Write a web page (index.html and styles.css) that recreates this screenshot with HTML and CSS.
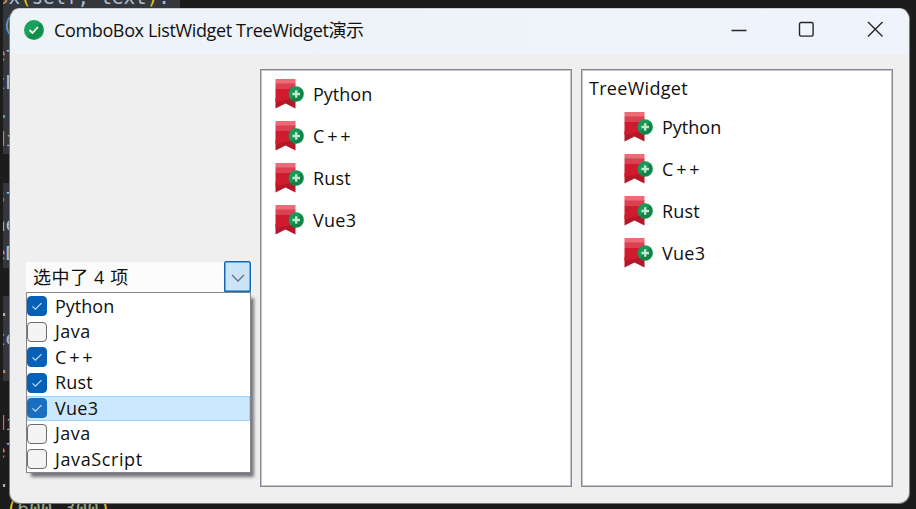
FILE: index.html
```html
<!DOCTYPE html>
<html lang="zh">
<head>
<meta charset="utf-8">
<title>ComboBox ListWidget TreeWidget演示</title>
<link rel="stylesheet" href="styles.css">
</head>
<body>
<svg class="defs" width="0" height="0">
<symbol id="bookmark" viewBox="0 0 30 30">
<path fill="#ed6a77" d="M.5 0h20v5H.5z"/><path fill="#dc4053" d="M.5 4.500h20v6H.5z"/><path fill="#d01a2d" d="M.5 10h20v10H.5z"/>
<path fill="#b41727" d="M.5 20h20v9.500l-10-5-10 5z"/><path fill="#d01a2d" d="M.5 19h20l-20 4z"/><circle cx="21.200" cy="15" r="7.700" fill="#159b55"/><path d="M26.400 9.500a7.700 7.700 0 0 1-10.800 10.900z" fill="#118347"/>
<path d="M21.200 11.200v7.600M17.400 15h7.600" stroke="#c5e8d3" stroke-width="2.300"/>
</symbol>
<symbol id="check" viewBox="0 0 20 20"><path d="M5 10.400l3.200 3.200L15 6.800" fill="none" stroke="#c8e2f7" stroke-width="1.3"/></symbol>
</svg>
<div class="code" aria-hidden="true">
<div class="line band b1"><i>o</i>x<b>(</b><em>self, text</em><b>)</b>:</div>
<div class="line band paren"><u>(</u></div>
<div class="line band"><i>e</i>t</div>
<div class="line band"><i>t</i>B</div>
<div class="line band dot"><u>.s</u></div>
<div class="line band"><i>d</i>i</div>
<div class="line"></div>
<div class="line band"><i>s</i>t</div>
<div class="line band">ne</div>
<div class="line band"><i>e</i>D</div>
<div class="line"></div>
<div class="line band dot">.a</div>
<div class="line band">te</div>
<div class="line band dot"><i>.</i>t</div>
<div class="line"></div>
<div class="line"><i>d</i>i</div>
<div class="line"><i>e</i>l</div>
<div class="line dot">.m</div>
<div class="line last"><b>(</b><s>600</s>,<s>300</s><b>)</b></div>
</div>
<main class="window">
<header class="titlebar">
<svg class="logo" viewBox="0 0 20 20"><circle cx="10" cy="10" r="10" fill="#18a05c"/><path d="M17 3a10 10 0 0 1-14 14z" fill="#108245" opacity=".65"/><path d="M5.500 10l3 3 5.500-6" fill="none" stroke="#f5fff8" stroke-width="1.8"/></svg>
<h1>ComboBox ListWidget TreeWidget<span>演示</span></h1>
<svg class="controls" viewBox="0 0 154 18" fill="none" stroke="#252527" stroke-width="1.4"><path d="M1.500 9.500h15"/><rect x="69.500" y="1.500" width="13.600" height="13.600" rx="1.500"/><path d="M138 1l14.500 14.500M152.500 1L138 15.500"/></svg>
</header>
<div class="content">
<section class="combo">
<div class="field"><span>选中了 4 项</span><div class="drop"><svg viewBox="0 0 14 8"><path d="M1 1l6 6 6-6" fill="none" stroke="#63727e" stroke-width="1.3"/></svg></div></div>
<ul class="menu">
<li><svg class="box on"><use href="#check"/></svg><span>Python</span></li>
<li><svg class="box"></svg><span class="java">Java</span></li>
<li><svg class="box on"><use href="#check"/></svg><span class="cpp">C++</span></li>
<li><svg class="box on"><use href="#check"/></svg><span class="rust">Rust</span></li>
<li class="active"><svg class="box on"><use href="#check"/></svg><span class="vue">Vue3</span></li>
<li><svg class="box"></svg><span class="java">Java</span></li>
<li><svg class="box"></svg><span class="js">JavaScript</span></li>
</ul>
</section>
<ul class="panel list">
<li><svg><use href="#bookmark"/></svg><span>Python</span></li>
<li><svg><use href="#bookmark"/></svg><span class="cpp">C++</span></li>
<li><svg><use href="#bookmark"/></svg><span class="rust">Rust</span></li>
<li><svg><use href="#bookmark"/></svg><span class="vue">Vue3</span></li>
</ul>
<section class="panel tree">
<h2>TreeWidget</h2>
<ul>
<li><svg><use href="#bookmark"/></svg><span>Python</span></li>
<li><svg><use href="#bookmark"/></svg><span class="cpp">C++</span></li>
<li><svg><use href="#bookmark"/></svg><span class="rust">Rust</span></li>
<li><svg><use href="#bookmark"/></svg><span class="vue">Vue3</span></li>
</ul>
</section>
</div>
</main>
</body>
</html>
```
FILE: styles.css
```css
* { box-sizing: border-box; }
body { margin: 0; width: 916px; height: 509px; overflow: hidden; background: #1c1c1c; color: #101010; font: 18px/25px "Open Sans", "Noto Sans CJK SC", sans-serif; padding: 8px 6px 5px 9px; }
ul { list-style: none; margin: 0; padding: 0; }
h1, h2 { margin: 0; font-weight: 400; }
.defs { position: absolute; }
.code { position: absolute; inset: -16px auto auto 3px; font: 19.3px/28.4px "DejaVu Sans Mono", monospace; color: #a9bfd0; }
.line { height: 28.4px; width: 30px; white-space: pre; overflow: hidden; text-indent: -9px; }
.band { background: #34373c; }
.dot { text-indent: -5px; }
.b1 { width: 177px; text-indent: -6px; letter-spacing: -.1px; }
.paren { text-indent: -1px; }
.last { width: 130px; overflow: visible; text-indent: 3px; }
.code i { font-style: normal; color: #c98b65; }
.code b { font-weight: 400; color: #e6c51c; }
.code u { text-decoration: none; color: #5e9dc8; }
.code em { font-style: normal; }
.code s { text-decoration: none; color: #93a684; }
.window { position: relative; height: 496px; background: #efefef; border: 1px solid #777b7d; border-top-color: #c9ced1; border-radius: 11px; overflow: hidden; }
.titlebar { height: 45px; display: flex; align-items: center; padding: 0 25px 3px 14px; background: linear-gradient(90deg, #eef3f8, #eff3fb); }
.logo { width: 20px; height: 20px; margin-top: -1px; }
h1 { margin-left: 10px; font-size: 18px; letter-spacing: -.36px; white-space: nowrap; }
.controls { width: 154px; height: 18px; margin-left: auto; }
.content { display: flex; padding: 15px 16px 16px; height: 448px; }
.combo { width: 226px; flex: none; margin: 193px 8px 0 0; }
.field { height: 30px; background: #fbfbfb; display: flex; align-items: center; padding-left: 7px; letter-spacing: .6px; }
.drop { width: 27px; height: 31px; margin: 0 1px 1px auto; background: #cce4f7; border: 1px solid #1268b4; box-shadow: inset 0 0 0 .5px #1268b4; border-radius: 2px 2px 0 0; display: flex; align-items: center; justify-content: center; }
.drop svg { width: 14px; height: 8px; margin-top: 2px; }
.menu { width: 225px; height: 181px; border: 1px solid #83868e; background: #fff; box-shadow: 4px 5px 3px -1px #77777a; padding-top: .5px; }
.menu li { height: 25.5px; display: flex; align-items: center; gap: 8px; }
.box { width: 20px; height: 20px; border: 1.5px solid #6c6c6c; border-radius: 4px; background: #f4f4f4; flex: none; }
.on { background: #0560b6; border-color: #0560b6; }
.active { background: #cce8ff; box-shadow: inset 0 0 0 1px #99d1f8; }
.active .on { background: #196ebf; border-color: #196ebf; }
.java { letter-spacing: .5px; }
.cpp { letter-spacing: 2.8px; }
.rust { letter-spacing: .2px; }
.vue { letter-spacing: .3px; }
.js { letter-spacing: .6px; }
.panel { background: #fff; border: 1px solid #858992; box-shadow: inset 0 0 0 1px #c3c5ca; height: 418px; width: 312px; flex: none; }
.list { padding: 3px 0 0 14px; }
.list li, .tree li { height: 42px; display: flex; align-items: center; gap: 8px; }
.panel svg { width: 30px; height: 30px; }
.panel li span { margin-top: 1px; }
.tree { margin-left: 9px; padding-top: 5px; }
.tree h2 { font-size: 18px; line-height: 26px; padding-left: 7px; letter-spacing: .3px; }
.tree ul { padding: 5px 0 0 42px; }
```
